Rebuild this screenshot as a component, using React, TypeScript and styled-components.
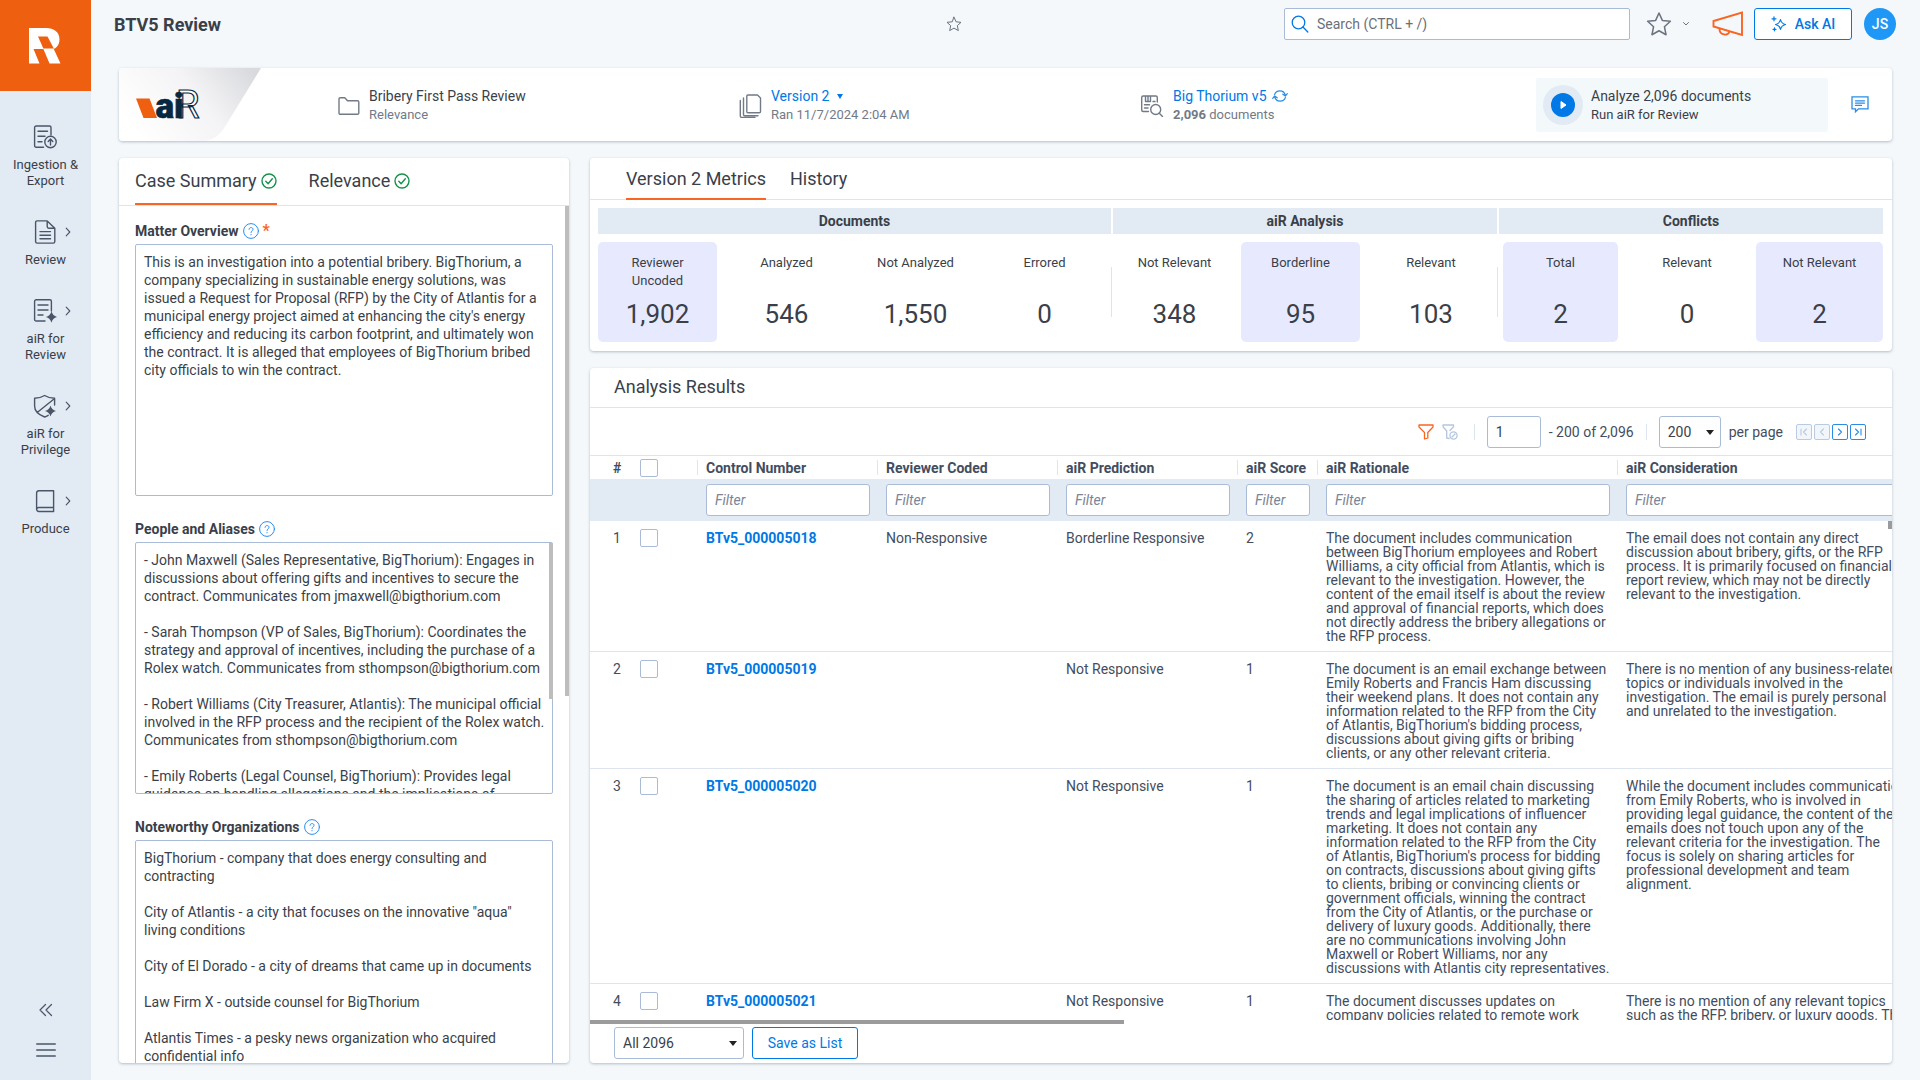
import React from "react";
import styled, { createGlobalStyle, css } from "styled-components";

const c = {
  page: "#f4f8fa",
  side: "#e2eaf4",
  band: "#e2eaf3",
  text: "#3a3f49",
  cell: "#434d5e",
  muted: "#727a87",
  icon: "#4a5568",
  blue: "#0078e6",
  orange: "#f96522",
  brand: "#ee5f10",
  line: "#dfe5ee",
  field: "#a9bbd6",
  lilac: "#e7eafe",
  navy: "#06293f",
};

const Global = createGlobalStyle`
  *, *::before, *::after { box-sizing: border-box; }
  body { margin: 0; background: ${c.page}; }
  body, button, input, select, textarea { font-family: Roboto, "Liberation Sans", sans-serif; font-size: 14px; color: ${c.text}; }
  button { cursor: pointer; }
  svg { display: block; flex: none; }
`;

const Shell = styled.div`
  display: flex;
  height: 100vh;
  overflow: hidden;
`;

/* ---------- sidebar ---------- */
const Sidebar = styled.aside`
  flex: 0 0 91px;
  display: flex;
  flex-direction: column;
  background: ${c.side};
`;
const Brand = styled.a`
  display: flex;
  align-items: center;
  justify-content: center;
  height: 91px;
  background: ${c.brand};
`;
const Nav = styled.nav`
  display: flex;
  flex-direction: column;
  gap: 31px;
  padding-top: 34px;
`;
const NavItem = styled.a`
  display: grid;
  grid-template-columns: 33px 24px 1fr;
  row-gap: 8px;
  align-items: center;
  color: ${c.icon};
  text-decoration: none;
`;
const NavIcon = styled.span`
  grid-column: 2;
`;
const Chevron = styled.span`
  justify-self: start;
  padding-left: 8px;
`;
const NavLabel = styled.span`
  grid-column: 1 / -1;
  font-size: 13px;
  line-height: 16px;
  text-align: center;
  white-space: pre-line;
  color: ${c.text};
`;
const SideFoot = styled.div`
  margin-top: auto;
  display: flex;
  flex-direction: column;
  align-items: center;
  gap: 20px;
  padding-bottom: 20px;
`;
const IconButton = styled.button`
  display: inline-flex;
  align-items: center;
  justify-content: center;
  padding: 0;
  border: 0;
  background: none;
  color: ${(p: { $tone?: string }) => p.$tone || c.icon};
`;

/* ---------- top bar ---------- */
const Main = styled.main`
  flex: 1;
  min-width: 0;
  display: flex;
  flex-direction: column;
`;
const TopBar = styled.header`
  flex: none;
  display: grid;
  grid-template-columns: minmax(0, 832fr) minmax(0, 338fr) minmax(0, 612fr);
  align-items: center;
  padding: 8px 24px 28px 23px;
`;
const PageTitle = styled.h1`
  margin: 0;
  padding-top: 2px;
  font-size: 18px;
  line-height: 24px;
  font-weight: 700;
`;
const PageStar = styled.div`
  padding-top: 2px;
`;
const TopTools = styled.div`
  display: flex;
  align-items: center;
`;
const SearchBox = styled.label`
  flex: 1;
  display: flex;
  align-items: center;
  gap: 6px;
  height: 32px;
  margin-right: 16px;
  padding: 0 6px;
  background: #fff;
  border: 1px solid ${c.field};
  border-radius: 2px;
  color: ${c.blue};
`;
const SearchInput = styled.input`
  flex: 1;
  min-width: 0;
  border: 0;
  outline: 0;
  background: none;
  &::placeholder { color: #6b7078; opacity: 1; }
`;
const MenuToggle = styled(IconButton)`
  gap: 10px;
  margin-right: 22px;
`;
const Announce = styled(IconButton)`
  margin-right: 10px;
`;
const OutlineButton = styled.button<{ $wide?: boolean }>`
  display: inline-flex;
  align-items: center;
  justify-content: center;
  gap: 8px;
  height: 32px;
  min-width: ${(p) => (p.$wide ? 106 : 98)}px;
  padding: 0 14px;
  background: #fff;
  border: 1px solid ${c.blue};
  border-radius: 3px;
  color: ${c.blue};
  font-weight: ${(p) => (p.$wide ? 400 : 500)};
`;
const Avatar = styled.button`
  width: 32px;
  height: 32px;
  margin-left: 12px;
  padding: 0;
  border: 0;
  border-radius: 50%;
  background: #1f97f6;
  color: #fff;
  font-weight: 500;
`;

/* ---------- cards ---------- */
const Body = styled.div`
  flex: 1;
  min-height: 0;
  display: flex;
  flex-direction: column;
  gap: 17px;
  padding: 0 28px 17px;
`;
const Card = styled.section`
  background: #fff;
  border-radius: 4px;
  box-shadow: 0 1px 3px rgba(70, 95, 125, 0.38);
`;
const SummaryCard = styled(Card)`
  flex: none;
  display: flex;
  align-items: center;
  height: 73px;
`;
const LogoCell = styled.div`
  position: relative;
  flex: 0 0 142px;
  align-self: stretch;
  display: flex;
  align-items: center;
`;
const Swoosh = styled.svg`
  position: absolute;
  left: 0;
  top: 0;
`;
const AirMark = styled.svg`
  position: relative;
  margin-left: 17px;
`;
const Facts = styled.div`
  flex: 1;
  display: grid;
  grid-template-columns: 401fr 402fr 395fr 292fr;
  align-items: center;
  padding-left: 77px;
`;
const Fact = styled.div`
  display: flex;
  align-items: center;
  gap: 9px;
  color: ${c.muted};
`;
const RunBox = styled.button`
  display: flex;
  align-items: center;
  gap: 8px;
  height: 54px;
  padding: 0 7px;
  border: 0;
  border-radius: 2px;
  background: #f3f8fb;
  text-align: left;
`;
const PlayRing = styled.span`
  display: grid;
  place-items: center;
  width: 40px;
  height: 40px;
  border-radius: 50%;
  background: ${c.band};
`;
const FactText = styled.span`
  display: block;
  padding-top: 2px;
  line-height: 18px;
`;
const FactTitle = styled.span`
  display: flex;
  align-items: center;
  gap: 5px;
  color: ${c.text};
`;
const FactLink = styled.button`
  display: inline-flex;
  align-items: center;
  gap: 8px;
  padding: 0;
  border: 0;
  background: none;
  color: ${c.blue};
  line-height: 18px;
`;
const FactSub = styled.span<{ $dark?: boolean }>`
  display: block;
  margin-top: 1px;
  font-size: 13px;
  color: ${(p) => (p.$dark ? c.text : c.muted)};
`;
const Notes = styled.div`
  flex: 0 0 64px;
  display: flex;
  justify-content: center;
`;

const Columns = styled.div`
  flex: 1;
  min-height: 0;
  display: grid;
  grid-template-columns: minmax(0, 450fr) minmax(0, 1302fr);
  gap: 21px;
`;
const Stack = styled.div`
  min-height: 0;
  display: flex;
  flex-direction: column;
  gap: 17px;
`;

const Tabs = styled.div<{ $inset: number; $gap: number; $tall?: boolean }>`
  flex: none;
  display: flex;
  gap: ${(p) => p.$gap}px;
  height: ${(p) => (p.$tall ? 48 : 42)}px;
  padding: 0 ${(p) => p.$inset}px;
  border-bottom: 1px solid ${c.line};
  ${(p) => !p.$tall && css`& > button { margin-bottom: -1px; }`}
`;
const Tab = styled.button<{ $on?: boolean }>`
  display: inline-flex;
  align-items: center;
  gap: 4px;
  padding: 0;
  border: 0;
  border-bottom: 2px solid ${(p) => (p.$on ? c.orange : "transparent")};
  background: none;
  font-size: 18px;
`;

const CriteriaCard = styled(Card)`
  position: relative;
  min-height: 0;
  display: flex;
  flex-direction: column;
  overflow: hidden;
`;
const Criteria = styled.div`
  flex: 1;
  min-height: 0;
  overflow: hidden;
  display: flex;
  flex-direction: column;
  gap: 24px;
  padding: 16px 16px 0;
`;
const Thumb = styled.span<{ $w: number; $h: number; $top: number; $tone?: string }>`
  position: absolute;
  right: 0;
  top: ${(p) => p.$top}px;
  width: ${(p) => p.$w}px;
  height: ${(p) => p.$h}px;
  background: ${(p) => p.$tone || "#bdbdbd"};
`;
const Field = styled.div`
  flex: none;
`;
const FieldHead = styled.div`
  display: flex;
  align-items: center;
  gap: 4px;
  height: 22px;
  padding-bottom: 4px;
  line-height: 18px;
  font-weight: 700;
`;
const Required = styled.span`
  color: ${c.orange};
  font-size: 16px;
`;
const AreaWrap = styled.div`
  position: relative;
`;
const Area = styled.textarea`
  display: block;
  width: 100%;
  height: 252px;
  padding: 8px 6px 8px 8px;
  border: 1px solid ${c.field};
  border-radius: 2px;
  background: #fff;
  line-height: 18px;
  overflow: hidden;
  outline: 0;
  resize: none;
`;

/* ---------- metrics ---------- */
const Metrics = styled.div`
  display: grid;
  grid-template-columns: 513fr 384fr 384fr;
  gap: 2px;
  padding: 8px 9px 9px 8px;
`;
const Group = styled.div`
  display: flex;
  flex-direction: column;
  gap: 8px;
`;
const GroupHead = styled.h2`
  margin: 0;
  background: ${c.band};
  font-size: 14px;
  line-height: 26px;
  font-weight: 700;
  text-align: center;
`;
const Cells = styled.div<{ $cols: string; $pad: string; $rule?: boolean }>`
  position: relative;
  display: grid;
  grid-template-columns: ${(p) => p.$cols};
  gap: 10px;
  padding: ${(p) => p.$pad};
  ${(p) =>
    p.$rule &&
    css`
      &::after {
        content: "";
        position: absolute;
        right: -1px;
        top: 25px;
        width: 1px;
        height: 50px;
        background: ${c.line};
      }
    `}
`;
const Metric = styled.button<{ $on?: boolean }>`
  display: flex;
  flex-direction: column;
  align-items: center;
  justify-content: space-between;
  height: 100px;
  padding: 12px 16px;
  border: 0;
  border-radius: 5px;
  background: ${(p) => (p.$on ? c.lilac : "transparent")};
  white-space: nowrap;
`;
const MetricLabel = styled.span`
  font-size: 13px;
  line-height: 18px;
  white-space: pre-line;
`;
const MetricValue = styled.span`
  font-size: 26px;
  line-height: 32px;
`;

/* ---------- results ---------- */
const Results = styled(Card)`
  flex: 1;
  min-height: 0;
  display: flex;
  flex-direction: column;
  overflow: hidden;
`;
const ResultsTitle = styled.h2`
  flex: none;
  margin: 0;
  padding: 0 24px 1px;
  border-bottom: 1px solid ${c.line};
  font-size: 18px;
  font-weight: 400;
  line-height: 38px;
`;
const Pager = styled.div`
  flex: none;
  display: flex;
  align-items: center;
  justify-content: flex-end;
  gap: 8px;
  height: 48px;
  padding-right: 26px;
  border-bottom: 1px solid ${c.line};
  color: ${c.cell};
`;
const Rule = styled.span`
  width: 1px;
  height: 16px;
  margin: 0 4px;
  background: ${c.line};
`;
const FilterTools = styled.div`
  display: flex;
  gap: 8px;
  margin-right: 4px;
`;
const PageButtons = styled.div`
  display: flex;
  gap: 2px;
  margin-left: 5px;
`;
const boxed = css`
  height: 32px;
  padding: 0 8px;
  border: 1px solid ${c.field};
  border-radius: 3px;
  background: #fff;
  outline: 0;
`;
const PageInput = styled.input`
  ${boxed}
  width: 54px;
`;
const SelectWrap = styled.label<{ $w: number }>`
  position: relative;
  display: inline-block;
  width: ${(p) => p.$w}px;
`;
const Select = styled.select`
  ${boxed}
  width: 100%;
  appearance: none;
`;
const Caret = styled.span`
  position: absolute;
  right: 7px;
  top: 14px;
  border: 4px solid transparent;
  border-top: 5px solid #222;
  border-bottom: 0;
  pointer-events: none;
`;
const LinkCaret = styled.span`
  border: 3px solid transparent;
  border-top: 5px solid ${c.blue};
  border-bottom: 0;
`;
const PageButton = styled.button`
  display: grid;
  place-items: center;
  width: 16px;
  height: 16px;
  padding: 0;
  border: 1px solid #2a8ce6;
  border-radius: 2px;
  background: #fff;
  color: #2a8ce6;
  &:disabled { border-color: #b9cbe2; background: #f2f6fa; color: #b9cbe2; }
`;
const TableView = styled.div`
  position: relative;
  flex: 1;
  min-height: 0;
  overflow: hidden;
`;
const Table = styled.table`
  table-layout: fixed;
  width: 1327px;
  border-collapse: separate;
  border-spacing: 0;
  color: ${c.cell};
`;
const Th = styled.th<{ $first?: boolean; $plain?: boolean }>`
  position: relative;
  height: 23px;
  padding: 0 7px 0 ${(p) => (p.$first ? 23 : 9)}px;
  text-align: left;
  vertical-align: middle;
  line-height: 18px;
  font-weight: 700;
  white-space: nowrap;
  ${(p) =>
    !p.$first &&
    !p.$plain &&
    css`
      &::before {
        content: "";
        position: absolute;
        left: 0;
        top: 4px;
        width: 1px;
        height: 15px;
        background: ${c.line};
      }
    `}
`;
const FilterCell = styled.td`
  padding: 5px 7px 5px 9px;
  background: ${c.band};
`;
const FilterInput = styled.input`
  ${boxed}
  display: block;
  width: 100%;
  &::placeholder { color: #7b8595; font-style: italic; opacity: 1; }
`;
const Td = styled.td<{ $first?: boolean }>`
  padding: 10px 7px 8px ${(p) => (p.$first ? 23 : 9)}px;
  border-bottom: 1px solid ${c.line};
  vertical-align: top;
  line-height: 14px;
  white-space: pre-line;
`;
const Check = styled.input`
  appearance: none;
  display: block;
  width: 18px;
  height: 18px;
  margin: 0 1px;
  border: 1px solid ${c.field};
  border-radius: 2px;
  background: #fff;
`;
const CheckTd = styled(Td)`
  padding-top: 8px;
`;
const DocLink = styled.a`
  color: ${c.blue};
  font-weight: 700;
  text-decoration: none;
`;
const Track = styled.div`
  flex: none;
  height: 4px;
`;
const TrackThumb = styled.div`
  width: 41%;
  height: 100%;
  background: #9b9b9b;
`;
const Footer = styled.footer`
  flex: none;
  display: flex;
  gap: 8px;
  padding: 3px 24px 4px;
`;

/* ---------- icons ---------- */
const Svg = ({ w = 24, h, vb, sw = 1.4, children }: { w?: number; h?: number; vb?: string; sw?: number; children: React.ReactNode }) => (
  <svg width={w} height={h || w} viewBox={vb || `0 0 ${w} ${h || w}`} fill="none" stroke="currentColor" strokeWidth={sw} strokeLinecap="round" strokeLinejoin="round" aria-hidden="true">
    {children}
  </svg>
);
const star = "M12 1.8l3.1 6.9 7.4.8-5.5 5 1.5 7.4L12 18.2l-6.5 3.7L7 14.5l-5.5-5 7.4-.8z";
const ChevR = () => (
  <Svg w={6} h={10} sw={1.1}><path d="M1.2 1.2L4.8 5 1.2 8.8" /></Svg>
);
const Spark = ({ x, y, r }: { x: number; y: number; r: number }) => (
  <path fill="currentColor" stroke="none" d={`M${x} ${y - r}Q${x + r * 0.2} ${y - r * 0.2} ${x + r} ${y}Q${x + r * 0.2} ${y + r * 0.2} ${x} ${y + r}Q${x - r * 0.2} ${y + r * 0.2} ${x - r} ${y}Q${x - r * 0.2} ${y - r * 0.2} ${x} ${y - r}Z`} />
);
const navIcons: Record<string, React.ReactNode> = {
  ingest: (
    <Svg><path d="M10.5 22.3H3.2a1.6 1.6 0 0 1-1.6-1.6V2.6A1.6 1.6 0 0 1 3.2 1h13.2A1.6 1.6 0 0 1 18 2.600V10M5 6.200h9.500M5 11.200h7M5 16.700h4" /><circle cx="17.500" cy="17" r="5.700" /><path d="M17.500 20v-5.600M15.200 16.400l2.300-2.300 2.300 2.300" /></Svg>
  ),
  review: (
    <Svg><path d="M14.200.9H4.200a1.600 1.600 0 0 0-1.600 1.600v19a1.600 1.600 0 0 0 1.600 1.600h16a1.600 1.600 0 0 0 1.600-1.600V8.200zM14.200.9v5.700a1.600 1.600 0 0 0 1.600 1.600h6M7 11.600h10.500M7 15.200h10.500M7 18.800h10.500" /></Svg>
  ),
  air: (
    <Svg><path d="M12 22H3.200a1.600 1.600 0 0 1-1.600-1.600V2.300A1.600 1.600 0 0 1 3.200.7h13.600a1.600 1.600 0 0 1 1.600 1.600V12M5 6h10M5 11h10M5 16h5" /><Spark x={18.5} y={18} r={5.700} /></Svg>
  ),
  shield: (
    <Svg><path d="M21.600 11V4.200c-4.300 0-7.300-1-10-2.700C8.900 3.200 5.900 4.200 1.600 4.200V12c0 5.500 4.600 9 10 11M21.300 4.800L4.200 18.500M11.600 23c1.700-.5 2.500-1 3.600-1.700" /><Spark x={17.500} y={17} r={5.500} /></Svg>
  ),
  book: (
    <Svg><path d="M20.600 18.500V1.700H6A2.400 2.400 0 0 0 3.600 4v16.200A2.200 2.200 0 0 0 5.800 22.500h14.800v-4H5.800a2.200 2.200 0 0 0-2.200 2" /></Svg>
  ),
};
const CheckOk = () => (
  <Svg w={16} vb="0 0 16 16" sw={1.4}><g stroke="#14934c"><circle cx="8" cy="8" r="7" /><path d="M4.800 8.300l2.300 2.400 4.200-5" /></g></Svg>
);
const Help = () => (
  <Svg w={16} vb="0 0 16 16" sw={1}><g stroke="#2a8df0"><circle cx="8" cy="8" r="7.400" /><path d="M6 6.300c.1-2.500 4-2.300 4 0 0 1.500-2 1.600-2 3.200M8 11.500v.3" /></g></Svg>
);

/* ---------- data ---------- */
const nav = [
  { icon: "ingest", label: "Ingestion &\nExport", more: false },
  { icon: "review", label: "Review", more: true },
  { icon: "air", label: "aiR for\nReview", more: true },
  { icon: "shield", label: "aiR for\nPrivilege", more: true },
  { icon: "book", label: "Produce", more: true },
];

const fields = [
  {
    id: "matter",
    label: "Matter Overview",
    required: true,
    text: "This is an investigation into a potential bribery. BigThorium, a company specializing in sustainable energy solutions, was issued a Request for Proposal (RFP) by the City of Atlantis for a municipal energy project aimed at enhancing the city's energy efficiency and reducing its carbon footprint, and ultimately won the contract. It is alleged that employees of BigThorium bribed city officials to win the contract.",
  },
  {
    id: "people",
    label: "People and Aliases",
    scroll: true,
    text: "- John Maxwell (Sales Representative, BigThorium): Engages in discussions about offering gifts and incentives to secure the contract. Communicates from jmaxwell@bigthorium.com\n\n- Sarah Thompson (VP of Sales, BigThorium): Coordinates the strategy and approval of incentives, including the purchase of a Rolex watch. Communicates from sthompson@bigthorium.com\n\n- Robert Williams (City Treasurer, Atlantis): The municipal official involved in the RFP process and the recipient of the Rolex watch. Communicates from sthompson@bigthorium.com\n\n- Emily Roberts (Legal Counsel, BigThorium): Provides legal guidance on handling allegations and the implications of",
  },
  {
    id: "orgs",
    label: "Noteworthy Organizations",
    text: "BigThorium - company that does energy consulting and contracting\n\nCity of Atlantis - a city that focuses on the innovative \"aqua\" living conditions\n\nCity of El Dorado - a city of dreams that came up in documents\n\nLaw Firm X - outside counsel for BigThorium\n\nAtlantis Times - a pesky news organization who acquired confidential info",
  },
];

const groups = [
  {
    title: "Documents", cols: "repeat(4, minmax(0, 1fr))", pad: "0 7px 0 0", rule: true,
    cells: [["Reviewer\nUncoded", "1,902", true], ["Analyzed", "546"], ["Not Analyzed", "1,550"], ["Errored", "0"]],
  },
  {
    title: "aiR Analysis", cols: "113fr 119fr 122fr", pad: "0 5px", rule: true,
    cells: [["Not Relevant", "348"], ["Borderline", "95", true], ["Relevant", "103"]],
  },
  {
    title: "Conflicts", cols: "115fr 118fr 127fr", pad: "0 0 0 4px", rule: false,
    cells: [["Total", "2", true], ["Relevant", "0"], ["Not Relevant", "2", true]],
  },
] as { title: string; cols: string; pad: string; rule: boolean; cells: [string, string, boolean?][] }[];

const columns = ["Control Number", "Reviewer Coded", "aiR Prediction", "aiR Score", "aiR Rationale", "aiR Consideration"];
const widths = [40, 67, 180, 180, 180, 80, 300, 300];

const rows = [
  {
    id: "BTv5_000005018", coded: "Non-Responsive", prediction: "Borderline Responsive", score: 2,
    rationale: "The document includes communication between BigThorium employees and Robert Williams, a city official from Atlantis, which is relevant to the investigation. However, the content of the email itself is about the review and approval of financial reports, which does not directly address the bribery allegations or the RFP process.",
    consideration: "The email does not contain any direct discussion about bribery, gifts, or the RFP process. It is primarily focused on financial report review, which may not be directly relevant to the investigation.",
  },
  {
    id: "BTv5_000005019", coded: "", prediction: "Not Responsive", score: 1,
    rationale: "The document is an email exchange between Emily Roberts and Francis Ham discussing their weekend plans. It does not contain any information related to the RFP from the City of Atlantis, BigThorium's bidding process, discussions about giving gifts or bribing clients, or any other relevant criteria.",
    consideration: "There is no mention of any business-related topics or individuals involved in the investigation. The email is purely personal and unrelated to the investigation.",
  },
  {
    id: "BTv5_000005020", coded: "", prediction: "Not Responsive", score: 1,
    rationale: "The document is an email chain discussing the sharing of articles related to marketing trends and legal implications of influencer marketing. It does not contain any information related to the RFP from the City of Atlantis, BigThorium's process for bidding on contracts, discussions about giving gifts to clients, bribing or convincing clients or government officials, winning the contract from the City of Atlantis, or the purchase or delivery of luxury goods. Additionally, there are no communications involving John Maxwell or Robert Williams, nor any discussions with Atlantis city representatives.",
    consideration: "While the document includes communication from Emily Roberts, who is involved in providing legal guidance, the content of the emails does not touch upon any of the relevant criteria for the investigation. The focus is solely on sharing articles for professional development and team alignment.",
  },
  {
    id: "BTv5_000005021", coded: "", prediction: "Not Responsive", score: 1,
    rationale: "The document discusses updates on company policies related to remote work",
    consideration: "There is no mention of any relevant topics such as the RFP, bribery, or luxury goods. The",
  },
];

export default function App() {
  return (
    <Shell>
      <Global />
      <Sidebar>
        <Brand href="#" aria-label="Home">
          <svg width="33" height="36" viewBox="0 0 33 36" aria-hidden="true">
            <path fill="#fff" d="M0 0H17C25 0 30.500 4 30.500 11.500C30.500 15.500 28.800 18.500 26 20.500H14.400L9 8.500H18.500L24.500 20.500L31.500 35.500H20.500L14.400 21H4.500L10.500 35.500H0Z" />
            <path fill={c.brand} d="M9 8.500H18.500L24.800 20.500H14.400Z" />
          </svg>
        </Brand>
        <Nav>
          {nav.map((n) => (
            <NavItem href="#" key={n.icon}>
              <NavIcon>{navIcons[n.icon]}</NavIcon>
              {n.more && <Chevron><ChevR /></Chevron>}
              <NavLabel>{n.label}</NavLabel>
            </NavItem>
          ))}
        </Nav>
        <SideFoot>
          <IconButton aria-label="Collapse">
            <Svg w={20} sw={1.2}><path d="M9.500 4.500L4 10l5.500 5.500M15.500 4.500L10 10l5.500 5.500" /></Svg>
          </IconButton>
          <IconButton aria-label="Menu">
            <Svg w={20} sw={1.700}><path d="M.8 4h18.400M.8 10h18.400M.8 16h18.400" /></Svg>
          </IconButton>
        </SideFoot>
      </Sidebar>

      <Main>
        <TopBar>
          <PageTitle>BTV5 Review</PageTitle>
          <PageStar>
            <IconButton aria-label="Favorite page" $tone="#6b7381"><Svg w={16} vb="0 0 24 24" sw={1.500}><path d={star} /></Svg></IconButton>
          </PageStar>
          <TopTools>
            <SearchBox>
              <Svg w={18} sw={1.3}><circle cx="7.500" cy="7.500" r="6.300" /><path d="M12 12l4.800 5" /></Svg>
              <SearchInput aria-label="Search" placeholder="Search (CTRL + /)" />
            </SearchBox>
            <MenuToggle aria-label="Favorites" $tone="#6b7381">
              <Svg w={26} vb="0 0 24 24" sw={1.400}><path d={star} /></Svg>
              <Svg w={8} h={6} sw={1}><path d="M1.500 1.500L4 4l2.500-2.500" /></Svg>
            </MenuToggle>
            <Announce aria-label="Announcements" $tone={c.orange}>
              <Svg w={32} h={26} sw={1.900}><path d="M30 1.500v22.500L1.500 15.500v-5.500zM7.500 17.600c-.4 6.500 9 8 9.800 3" strokeLinejoin="miter" /></Svg>
            </Announce>
            <OutlineButton>
              <Svg w={16} sw={1.200}><path d="M9.500 3.500c.6 3 1.800 4.200 5 5-3.200.8-4.400 2-5 5-.6-3-1.800-4.200-5-5 3.200-.8 4.400-2 5-5zM3 .8v4M1 2.800h4M3.500 11.800v3M2 13.300h3" /></Svg>
              Ask AI
            </OutlineButton>
            <Avatar>JS</Avatar>
          </TopTools>
        </TopBar>

        <Body>
          <SummaryCard>
            <LogoCell>
              <Swoosh width="144" height="73" aria-hidden="true">
                <defs>
                  <linearGradient id="fade" x1="0" y1="0.600" x2="1" y2="0.200">
                    <stop offset="0" stopColor="#ffffff" />
                    <stop offset="0.550" stopColor="#f4f4f6" />
                    <stop offset="1" stopColor="#d9dade" />
                  </linearGradient>
                </defs>
                <path fill="url(#fade)" d="M4 0H142L107 57Q98 73 84 73H4Q0 73 0 69V4Q0 0 4 0Z" />
              </Swoosh>
              <AirMark width="68" height="56" viewBox="0 -12 68 56" role="img" aria-label="aiR">
                <path fill={c.brand} d="M0 9.500H13.500L21 29H7.500Z" />
                <text x="40" y="28.500" fontFamily="Roboto, sans-serif" fontSize="38" fill="#fff" stroke={c.navy} strokeWidth="1.200">R</text>
                <text x="19.500" y="28.500" fontFamily="Roboto, sans-serif" fontWeight="900" fontSize="35" fill={c.navy} stroke={c.navy} strokeWidth="0.600">ai</text>
              </AirMark>
            </LogoCell>
            <Facts>
              <Fact>
                <Svg w={22} vb="0 0 22 22"><path d="M1 19V5a1.300 1.300 0 0 1 1.300-1.300h4.500l2.700 3h10a1.300 1.300 0 0 1 1.300 1.300V19a1.300 1.300 0 0 1-1.300 1.300H2.300A1.300 1.300 0 0 1 1 19z" /></Svg>
                <FactText>
                  <FactTitle>Bribery First Pass Review</FactTitle>
                  <FactSub>Relevance</FactSub>
                </FactText>
              </Fact>
              <Fact>
                <Svg w={23} h={26}><path d="M9 3h9.500l3 3v13.500a1.200 1.200 0 0 1-1.200 1.200H9a1.200 1.200 0 0 1-1.200-1.200V4.200A1.200 1.200 0 0 1 9 3zM4.500 6v16.500a1.200 1.200 0 0 0 1.200 1.200H19M1.300 8.500v15.600A1.300 1.300 0 0 0 2.600 25.400H16" /></Svg>
                <FactText>
                  <FactLink>Version 2 <LinkCaret /></FactLink>
                  <FactSub>Ran 11/7/2024 2:04 AM</FactSub>
                </FactText>
              </Fact>
              <Fact>
                <Svg w={23} h={24} vb="1 -1 23 24"><path d="M8.500 17.500H3.200A1.500 1.500 0 0 1 1.700 16V3.500A1.500 1.500 0 0 1 3.200 2h12.600a1.500 1.500 0 0 1 1.500 1.500V8M5.500 2v5.500h5V2M8 2v5.500M13 7.500h2M4.500 10.800h5M4.500 14h3.500" /><circle cx="15.700" cy="15.500" r="5" /><path d="M19.300 19.200l3.200 3.300" /></Svg>
                <FactText>
                  <FactTitle>
                    <FactLink>Big Thorium v5</FactLink>
                    <IconButton aria-label="Refresh" $tone="#2a8ce6">
                      <Svg w={16} h={14} sw={1.200}><path d="M2.600 5.500a5.600 5.600 0 0 1 10.600.2M13.400 8.500a5.600 5.600 0 0 1-10.600-.2M10.800 5.200l2.500 1.800 2-2.300M5.200 8.800L2.700 7 .7 9.300" /></Svg>
                    </IconButton>
                  </FactTitle>
                  <FactSub><b>2,096</b> documents</FactSub>
                </FactText>
              </Fact>
              <RunBox>
                <PlayRing>
                  <svg width="24" height="24" aria-hidden="true"><circle cx="12" cy="12" r="12" fill={c.blue} /><path d="M10 8.500l5 3.500-5 3.500z" fill="#fff" stroke="#fff" strokeLinejoin="round" /></svg>
                </PlayRing>
                <FactText>
                  <FactTitle>Analyze 2,096 documents</FactTitle>
                  <FactSub $dark>Run aiR for Review</FactSub>
                </FactText>
              </RunBox>
            </Facts>
            <Notes>
              <IconButton aria-label="Comments" $tone="#2a8ce6">
                <Svg w={18} h={18} sw={1.300}><path d="M1 .8h16v12H7.500L4.500 15.800v-3H1zM4.500 4.800h9M4.500 7.100h9M4.500 9.400h6" strokeLinejoin="miter" /></Svg>
              </IconButton>
            </Notes>
          </SummaryCard>

          <Columns>
            <CriteriaCard>
              <Tabs $inset={16} $gap={32} $tall>
                <Tab $on>Case Summary <CheckOk /></Tab>
                <Tab>Relevance <CheckOk /></Tab>
              </Tabs>
              <Criteria>
                {fields.map((f) => (
                  <Field key={f.id}>
                    <FieldHead>
                      <label htmlFor={f.id}>{f.label}</label>
                      <Help />
                      {f.required && <Required>*</Required>}
                    </FieldHead>
                    <AreaWrap>
                      <Area id={f.id} defaultValue={f.text} />
                      {f.scroll && <Thumb $w={4} $h={156} $top={1} />}
                    </AreaWrap>
                  </Field>
                ))}
              </Criteria>
              <Thumb $w={4} $h={490} $top={48} />
            </CriteriaCard>

            <Stack>
              <Card>
                <Tabs $inset={36} $gap={24}>
                  <Tab $on>Version 2 Metrics</Tab>
                  <Tab>History</Tab>
                </Tabs>
                <Metrics>
                  {groups.map((g) => (
                    <Group key={g.title}>
                      <GroupHead>{g.title}</GroupHead>
                      <Cells $cols={g.cols} $pad={g.pad} $rule={g.rule}>
                        {g.cells.map(([label, value, on]) => (
                          <Metric key={label} $on={on}>
                            <MetricLabel>{label}</MetricLabel>
                            <MetricValue>{value}</MetricValue>
                          </Metric>
                        ))}
                      </Cells>
                    </Group>
                  ))}
                </Metrics>
              </Card>

              <Results>
                <ResultsTitle>Analysis Results</ResultsTitle>
                <Pager>
                  <FilterTools>
                    <IconButton aria-label="Filter" $tone={c.orange}>
                      <Svg w={16} sw={1.300}><path d="M1 1h14v2L9.800 8.500V14L6.500 15V8.500L1 3z" /></Svg>
                    </IconButton>
                    <IconButton aria-label="Clear filter" $tone="#b3c6e0">
                      <Svg w={16} sw={1.300}><path d="M1 1h10.500v1.800L8 6.500M1 1v1.800L4.700 7v7l2.300.5" /><circle cx="11.500" cy="11.500" r="3.600" /><path d="M10 13l3-3" /></Svg>
                    </IconButton>
                  </FilterTools>
                  <Rule />
                  <PageInput aria-label="First row" defaultValue="1" />
                  <span>- 200 of 2,096</span>
                  <Rule />
                  <SelectWrap $w={62}>
                    <Select aria-label="Rows per page"><option>200</option></Select>
                    <Caret />
                  </SelectWrap>
                  <span>per page</span>
                  <PageButtons>
                    <PageButton disabled aria-label="First page"><Svg w={10} sw={1.100}><path d="M2 2v6M7.500 2L4.500 5l3 3" /></Svg></PageButton>
                    <PageButton disabled aria-label="Previous page"><Svg w={10} sw={1.100}><path d="M6.500 2l-3 3 3 3" /></Svg></PageButton>
                    <PageButton aria-label="Next page"><Svg w={10} sw={1.100}><path d="M3.500 2l3 3-3 3" /></Svg></PageButton>
                    <PageButton aria-label="Last page"><Svg w={10} sw={1.100}><path d="M8 2v6M2.500 2l3 3-3 3" /></Svg></PageButton>
                  </PageButtons>
                </Pager>
                <TableView>
                  <Table>
                    <colgroup>
                      {widths.map((w, i) => <col key={i} width={w} />)}
                    </colgroup>
                    <thead>
                      <tr>
                        <Th $first>#</Th>
                        <Th $plain><Check type="checkbox" aria-label="Select all" /></Th>
                        {columns.map((t) => <Th key={t}>{t}</Th>)}
                      </tr>
                      <tr>
                        <FilterCell colSpan={2} />
                        {columns.map((t) => (
                          <FilterCell key={t}><FilterInput placeholder="Filter" aria-label={`Filter ${t}`} /></FilterCell>
                        ))}
                      </tr>
                    </thead>
                    <tbody>
                      {rows.map((r, i) => (
                        <tr key={r.id}>
                          <Td $first>{i + 1}</Td>
                          <CheckTd><Check type="checkbox" aria-label={`Select ${r.id}`} /></CheckTd>
                          <Td><DocLink href="#">{r.id}</DocLink></Td>
                          <Td>{r.coded}</Td>
                          <Td>{r.prediction}</Td>
                          <Td>{r.score}</Td>
                          <Td>{r.rationale}</Td>
                          <Td>{r.consideration}</Td>
                        </tr>
                      ))}
                    </tbody>
                  </Table>
                  <Thumb $w={4} $h={8} $top={65} $tone="#9b9b9b" />
                </TableView>
                <Track><TrackThumb /></Track>
                <Footer>
                  <SelectWrap $w={130}>
                    <Select aria-label="Selection"><option>All 2096</option></Select>
                    <Caret />
                  </SelectWrap>
                  <OutlineButton $wide>Save as List</OutlineButton>
                </Footer>
              </Results>
            </Stack>
          </Columns>
        </Body>
      </Main>
    </Shell>
  );
}
